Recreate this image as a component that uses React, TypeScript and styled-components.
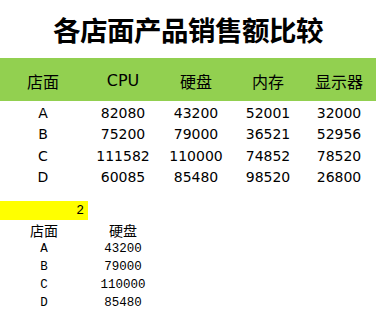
import styled, { createGlobalStyle } from "styled-components";

const GlobalStyle = createGlobalStyle`
  body {
    margin: 0;
    background: #fff;
    color: #000;
  }
`;

const Page = styled.div`
  width: 376px;
  display: flex;
  flex-direction: column;
`;

const Title = styled.h1`
  margin: 0;
  height: 58px;
  display: flex;
  align-items: center;
  justify-content: center;
  font-family: "Noto Sans CJK SC", sans-serif;
  font-weight: 700;
  font-size: 27.5px;
  letter-spacing: -0.5px;
`;

const Row = styled.div<{ $height: number }>`
  display: grid;
  grid-template-columns: 86px 74px 72px 72px 70px;
  height: ${(p) => p.$height}px;
  align-items: center;
`;

const HeaderRow = styled(Row)`
  background: #92d050;
`;

const Cell = styled.div`
  text-align: center;
  font-family: "DejaVu Sans", "Noto Sans CJK SC", sans-serif;
  font-size: 14px;
  white-space: nowrap;
`;

const HeadCell = styled(Cell)`
  font-size: 16px;
  padding-top: 2px;
`;

const Body = styled.div`
  padding-top: 1px;
`;

const Marker = styled.div`
  margin-top: 13px;
  width: 88px;
  height: 19px;
  background: #ffff00;
  box-sizing: border-box;
  padding-right: 4px;
  display: flex;
  align-items: center;
  justify-content: flex-end;
  font-family: "Liberation Mono", monospace;
  font-size: 13px;
`;

const SubRow = styled.div<{ $height: number }>`
  display: grid;
  grid-template-columns: 88px 70px;
  height: ${(p) => p.$height}px;
  align-items: center;
`;

const SubCell = styled.div<{ $head?: boolean }>`
  text-align: center;
  font-family: "Liberation Mono", "Noto Sans CJK SC", monospace;
  font-size: ${(p) => (p.$head ? 14 : 12.5)}px;
  white-space: nowrap;
`;

const columns = ["店面", "CPU", "硬盘", "内存", "显示器"];

const rows: [string, number, number, number, number][] = [
  ["A", 82080, 43200, 52001, 32000],
  ["B", 75200, 79000, 36521, 52956],
  ["C", 111582, 110000, 74852, 78520],
  ["D", 60085, 85480, 98520, 26800],
];

const picked = 2;

export default function App() {
  return (
    <Page>
      <GlobalStyle />
      <Title>各店面产品销售额比较</Title>

      <HeaderRow $height={43}>
        {columns.map((c) => (
          <HeadCell key={c}>{c}</HeadCell>
        ))}
      </HeaderRow>

      <Body>
        {rows.map((r) => (
          <Row key={r[0]} $height={21.5}>
            {r.map((v, i) => (
              <Cell key={i}>{v}</Cell>
            ))}
          </Row>
        ))}
      </Body>

      <Marker>{picked}</Marker>

      <SubRow $height={20}>
        <SubCell $head>{columns[0]}</SubCell>
        <SubCell $head>{columns[picked]}</SubCell>
      </SubRow>
      {rows.map((r) => (
        <SubRow key={r[0]} $height={18}>
          <SubCell>{r[0]}</SubCell>
          <SubCell>{r[picked]}</SubCell>
        </SubRow>
      ))}
    </Page>
  );
}
